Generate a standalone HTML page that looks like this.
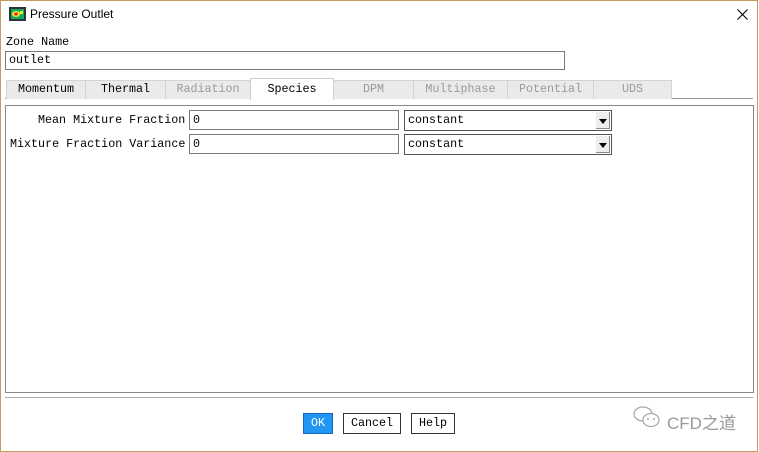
<!DOCTYPE html>
<html><head><style>
*{box-sizing:border-box;margin:0;padding:0}
body{width:759px;height:452px;background:#fff;position:relative;overflow:hidden;font-family:"Liberation Mono","Noto Sans CJK SC",monospace;font-size:11.7px;color:#000}
.a{position:absolute}
.m{font-family:"Liberation Mono",monospace !important}
.frame{left:0;top:0;width:758px;height:452px;border:1px solid #c49a5e}
.title{left:30px;top:7px;font-family:"Liberation Sans",sans-serif;font-size:12px}
.inp{border:1px solid #7a7a7a;background:#fff;padding-left:3px;line-height:18px;height:20px}
.tab{top:80px;height:19px;border:1px solid #d4d4d4;border-bottom:none;background:#eaeaea;text-align:center;line-height:17px}
.dis{color:#9a9a9a}
.sel{border:1px solid #555;background:#fff;height:21px;padding-left:3px;line-height:18px}
.arr{position:absolute;right:1px;top:1px;width:14px;height:17px;background:#eee;border-right:1px solid #888;border-bottom:1px solid #888}
.arr:after{content:"";position:absolute;left:3px;top:7px;border-left:4px solid transparent;border-right:4px solid transparent;border-top:5px solid #000}
.btn{top:413px;height:21px;border:1px solid #333;background:#fff;text-align:center;line-height:19px}
</style></head><body>
<div class="a frame"></div>
<svg class="a" style="left:9px;top:7px" width="17" height="14"><rect width="17" height="14" fill="#333"/><rect x="2" y="2" width="13" height="10" fill="#1a6"/><ellipse cx="7" cy="7" rx="4" ry="3" fill="#ee2"/><ellipse cx="7" cy="7" rx="2" ry="1.5" fill="#e22"/><rect x="11" y="4" width="3" height="3" fill="#ee2"/></svg>
<div class="a title">Pressure Outlet</div>
<svg class="a" style="left:737px;top:9px" width="11" height="11"><path d="M0.5 0.5L10.5 10.5M10.5 0.5L0.5 10.5" stroke="#000" stroke-width="1.1"/></svg>
<div class="a m" style="left:6px;top:35px">Zone Name</div>
<div class="a inp m" style="left:5px;top:51px;width:560px;height:19px;line-height:17px">outlet</div>
<div class="a" style="left:5px;top:98px;width:748px;border-top:1px solid #999"></div>
<div class="a tab m" style="left:6px;width:80px">Momentum</div>
<div class="a tab m" style="left:85px;width:81px">Thermal</div>
<div class="a tab dis m" style="left:165px;width:86px">Radiation</div>
<div class="a tab m" style="left:250px;width:84px;top:78px;height:22px;background:#fff;border-color:#ccc;line-height:20px">Species</div>
<div class="a tab dis m" style="left:333px;width:81px">DPM</div>
<div class="a tab dis m" style="left:413px;width:95px">Multiphase</div>
<div class="a tab dis m" style="left:507px;width:87px">Potential</div>
<div class="a tab dis m" style="left:593px;width:79px">UDS</div>
<div class="a" style="left:5px;top:105px;width:749px;height:288px;border:1px solid #888"></div>
<div class="a m" style="left:38px;top:113px">Mean Mixture Fraction</div>
<div class="a m" style="left:10px;top:137px">Mixture Fraction Variance</div>
<div class="a inp m" style="left:189px;top:110px;width:210px">0</div>
<div class="a inp m" style="left:189px;top:134px;width:210px">0</div>
<div class="a sel m" style="left:404px;top:110px;width:208px">constant<span class="arr"></span></div>
<div class="a sel m" style="left:404px;top:134px;width:208px">constant<span class="arr"></span></div>
<div class="a" style="left:5px;top:397px;width:748px;border-top:1px solid #aaa"></div>
<div class="a btn m" style="left:303px;width:30px;background:#2196f3;color:#fff;border-color:#1565c0">OK</div>
<div class="a btn m" style="left:343px;width:58px">Cancel</div>
<div class="a btn m" style="left:411px;width:44px">Help</div>
<svg class="a" style="left:632px;top:405px" width="30" height="25"><ellipse cx="11" cy="9" rx="9" ry="7" fill="none" stroke="#aaa" stroke-width="1.3"/><ellipse cx="19" cy="15" rx="8" ry="6.5" fill="#fff" stroke="#aaa" stroke-width="1.3"/><circle cx="16" cy="14" r="1" fill="#aaa"/><circle cx="22" cy="14" r="1" fill="#aaa"/></svg>
<div class="a" style="left:667px;top:409px;font-family:'Liberation Sans','Noto Sans CJK SC',sans-serif;font-size:17px;color:#999">CFD之道</div>
</body></html>
